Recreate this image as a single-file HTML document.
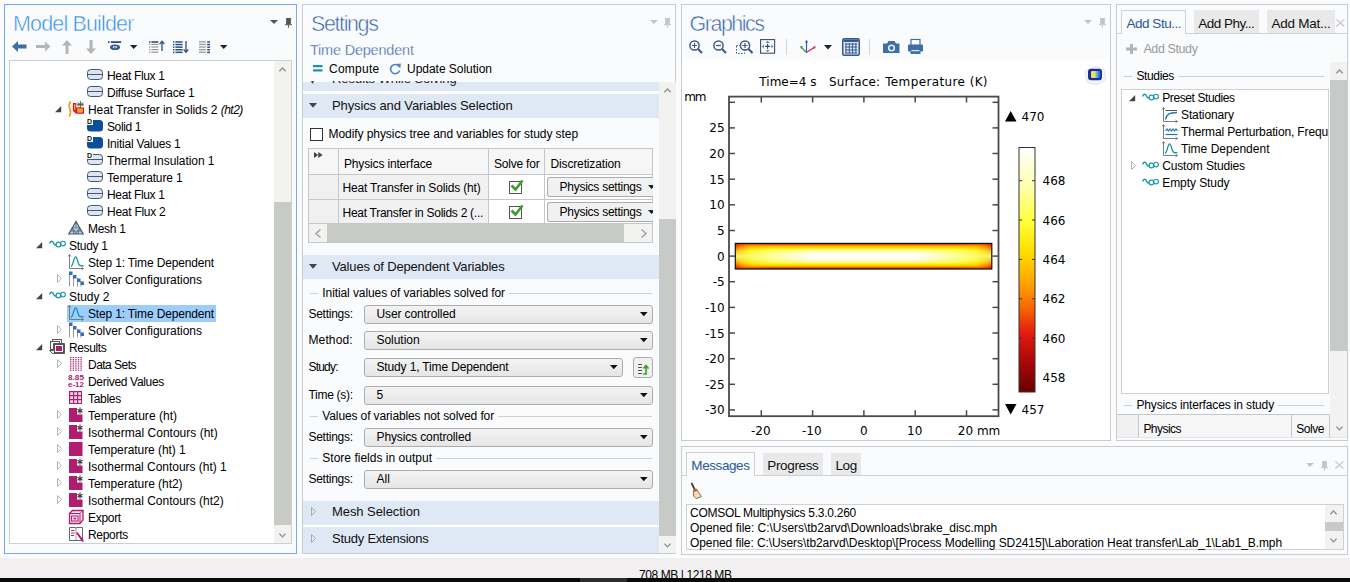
<!DOCTYPE html>
<html><head><meta charset="utf-8"><title>COMSOL Multiphysics</title>
<style>
html,body{margin:0;padding:0}
body{width:1350px;height:582px;overflow:hidden;background:#fafbfd;position:relative;font-family:"Liberation Sans",sans-serif}
div,span,svg{position:absolute;box-sizing:border-box}
svg{overflow:visible}
svg text{font-family:"Liberation Sans",sans-serif}
</style></head>
<body>
<div style="left:0px;top:557.5px;width:1350px;height:21px;background:#f1eff0;"></div>
<div style="left:0px;top:578px;width:1350px;height:4px;background:#0a0a0a;"></div>
<span style="left:639px;top:568px;font:12px/14px 'Liberation Sans',sans-serif;color:#000;white-space:pre;letter-spacing:-0.417px;">708 MB | 1218 MB</span>
<div style="left:0px;top:578px;width:1350px;height:4px;background:#0a0a0a;"></div>
<div style="left:580px;top:578px;width:47px;height:4px;background:#2c2c2c;"></div>
<div style="left:4px;top:4px;width:293px;height:550px;border:1px solid #72aaf3;"></div>
<span style="left:13px;top:11.5px;font:21.5px/24px 'Liberation Sans',sans-serif;color:#2e8be3;white-space:pre;letter-spacing:-0.842px;-webkit-text-stroke:0.55px #fafbfd;">Model Builder</span>
<svg style="left:270px;top:19.8px;" width="8" height="4" viewBox="0 0 8 4"><path d="M0 0 L8 0 L4 3.9 Z" fill="#555"/></svg>
<svg style="left:285px;top:18px;" width="7" height="10" viewBox="0 0 7 10"><rect x="1.1" y="0" width="4.8" height="6.4" fill="#555"/><rect x="0" y="6.2" width="7" height="1" fill="#555"/><rect x="3" y="7.2" width="1" height="2.5" fill="#555"/></svg>
<svg style="left:12px;top:41px;" width="15" height="11" viewBox="0 0 15 11"><path d="M0 5.5 L6 0 L6 3.5 L14.5 3.5 L14.5 7.5 L6 7.5 L6 11 Z" fill="#3d6ea8"/></svg>
<svg style="left:36px;top:41px;" width="15" height="11" viewBox="0 0 15 11"><path d="M14.5 5.5 L9 0.5 L9 4 L0 4 L0 7 L9 7 L9 10.5 Z" fill="#b5b5b5"/></svg>
<svg style="left:62px;top:40px;" width="10" height="14" viewBox="0 0 10 14"><path d="M5 0 L10 5.5 L6.5 5.5 L6.5 14 L3.5 14 L3.5 5.5 L0 5.5 Z" fill="#b5b5b5"/></svg>
<svg style="left:86px;top:40px;" width="10" height="14" viewBox="0 0 10 14"><path d="M5 14 L10 8.5 L6.5 8.5 L6.5 0 L3.5 0 L3.5 8.5 L0 8.5 Z" fill="#b5b5b5"/></svg>
<svg style="left:108px;top:41px;" width="14" height="10" viewBox="0 0 14 10"><rect x="0" y="0.2" width="1.6" height="1.8" fill="#2f4f80"/><rect x="2.9" y="0.2" width="10.2" height="1.8" fill="#2f4f80"/><ellipse cx="7" cy="6.2" rx="5" ry="2.8" fill="#35588f"/><ellipse cx="7" cy="6.2" rx="2.3" ry="1.1" fill="#e4eaf4"/><circle cx="7" cy="6.2" r="0.8" fill="#35588f"/></svg>
<svg style="left:130px;top:45px;" width="8" height="5" viewBox="0 0 8 5"><path d="M0 0 L7.4 0 L3.7 4 Z" fill="#222"/></svg>
<svg style="left:149.3px;top:41px;" width="16" height="13" viewBox="0 0 16 13"><rect x="0" y="0.2" width="1.4" height="1.6" fill="#2f4f80"/><rect x="2.4" y="0.2" width="7" height="1.6" fill="#2f4f80"/><rect x="0" y="2.8" width="1.4" height="1.2" fill="#9a9a9a"/><rect x="2.4" y="2.8" width="7" height="1.2" fill="#9a9a9a"/><rect x="0" y="5.4" width="1.4" height="1.2" fill="#9a9a9a"/><rect x="2.4" y="5.4" width="7" height="1.2" fill="#9a9a9a"/><rect x="0" y="8.0" width="1.4" height="1.2" fill="#9a9a9a"/><rect x="2.4" y="8.0" width="7" height="1.2" fill="#9a9a9a"/><rect x="0" y="10.6" width="1.4" height="1.2" fill="#9a9a9a"/><rect x="2.4" y="10.6" width="7" height="1.2" fill="#9a9a9a"/><path d="M13 10 L13 0.5 M10.6 3.2 L13 0.3 L15.4 3.2" stroke="#2f4f80" stroke-width="1.3" fill="none"/></svg>
<svg style="left:173.4px;top:41px;" width="16" height="13" viewBox="0 0 16 13"><rect x="0" y="0.2" width="1.4" height="1.5" fill="#2f4f80"/><rect x="2.4" y="0.2" width="7.2" height="1.5" fill="#2f4f80"/><rect x="0" y="2.8" width="1.4" height="1.5" fill="#2f4f80"/><rect x="2.4" y="2.8" width="7.2" height="1.5" fill="#2f4f80"/><rect x="0" y="5.4" width="1.4" height="1.5" fill="#2f4f80"/><rect x="2.4" y="5.4" width="7.2" height="1.5" fill="#2f4f80"/><rect x="0" y="8.0" width="1.4" height="1.5" fill="#2f4f80"/><rect x="2.4" y="8.0" width="7.2" height="1.5" fill="#2f4f80"/><rect x="0" y="10.6" width="1.4" height="1.5" fill="#2f4f80"/><rect x="2.4" y="10.6" width="7.2" height="1.5" fill="#2f4f80"/><path d="M13 0 L13 10.8 M10.6 8.3 L13 11.2 L15.4 8.3" stroke="#2f4f80" stroke-width="1.3" fill="none"/></svg>
<svg style="left:199px;top:41px;" width="16" height="13" viewBox="0 0 16 13"><rect x="0" y="0.2" width="6.8" height="1.3" fill="#9a9a9a"/><rect x="8.2" y="0.2" width="2.8" height="1.5" fill="#2f4f80"/><rect x="0" y="2.8" width="6.8" height="1.3" fill="#9a9a9a"/><rect x="8.2" y="2.8" width="2.8" height="1.5" fill="#2f4f80"/><rect x="0" y="5.4" width="6.8" height="1.3" fill="#9a9a9a"/><rect x="8.2" y="5.4" width="2.8" height="1.5" fill="#2f4f80"/><rect x="0" y="8.0" width="6.8" height="1.3" fill="#9a9a9a"/><rect x="8.2" y="8.0" width="2.8" height="1.5" fill="#2f4f80"/><rect x="0" y="10.6" width="6.8" height="1.3" fill="#9a9a9a"/><rect x="8.2" y="10.6" width="2.8" height="1.5" fill="#2f4f80"/></svg>
<svg style="left:220px;top:45px;" width="8" height="5" viewBox="0 0 8 5"><path d="M0 0 L7.4 0 L3.7 4 Z" fill="#222"/></svg>
<div style="left:9px;top:60px;width:283px;height:484px;background:#fff;border:1px solid #cfd0d3;"></div>
<div style="left:274px;top:61px;width:17px;height:482px;background:#f2f2f1;"></div>
<div style="left:274px;top:202px;width:17px;height:323px;background:#c7cac7;"></div>
<svg style="left:279px;top:67px;" width="7" height="5" viewBox="0 0 7 5"><path d="M0.4 4.2 L3.5 0.9 L6.6 4.2" fill="none" stroke="#8c8c8c" stroke-width="1.3"/></svg>
<svg style="left:279px;top:533px;" width="7" height="5" viewBox="0 0 7 5"><path d="M0.4 0.6 L3.5 3.9 L6.6 0.6" fill="none" stroke="#8c8c8c" stroke-width="1.3"/></svg>
<svg style="left:87px;top:67px;" width="16" height="16" viewBox="0 0 16 16"><rect x="0.5" y="2.5" width="15" height="10" rx="3.2" fill="#e1e4ec" stroke="#3c5a7d" stroke-width="1"/><line x1="0.5" y1="7.5" x2="15.5" y2="7.5" stroke="#3c5a7d" stroke-width="1"/></svg>
<span style="left:107px;top:68.5px;font:12px/14px 'Liberation Sans',sans-serif;color:#000;white-space:pre;letter-spacing:-0.351px;">Heat Flux 1</span>
<svg style="left:87px;top:84px;" width="16" height="16" viewBox="0 0 16 16"><rect x="0.5" y="2.5" width="15" height="10" rx="3.2" fill="#e1e4ec" stroke="#3c5a7d" stroke-width="1"/><line x1="0.5" y1="7.5" x2="15.5" y2="7.5" stroke="#3c5a7d" stroke-width="1"/></svg>
<span style="left:107px;top:85.5px;font:12px/14px 'Liberation Sans',sans-serif;color:#000;white-space:pre;letter-spacing:-0.260px;">Diffuse Surface 1</span>
<svg style="left:55px;top:106px;" width="7" height="7" viewBox="0 0 7 7"><path d="M6.2 0 L6.2 6.2 L0 6.2 Z" fill="#444"/></svg>
<svg style="left:68px;top:101px;" width="16" height="16" viewBox="0 0 16 16"><path d="M2.6 0.3 C0.6 3.5 0.9 6 2 8.3 C3 10.8 2.6 13 1.2 15.6" fill="none" stroke="#f79a1e" stroke-width="1.7"/><path d="M4.9 2.1 L8.4 2.1 L8.4 6 L16 6 L16 12.8 L8 12.8 L4.9 9.8 Z" fill="#d9142c"/><rect x="9.2" y="7.4" width="5.6" height="4.2" fill="#f6a623"/><path d="M6 3.2 L7.4 3.2 L7.4 9.8 L6 8.6 Z" fill="#f6a623"/><path d="M8.4 4.2 C9.5 7.2 14.5 7.2 16 4.2 L16 6.4 L8.4 6.4 Z" fill="#fff"/><g stroke="#3f4b3f" stroke-width="0.85"><line x1="12.4" y1="0" x2="12.4" y2="6.8"/><line x1="9.4" y1="1.7" x2="15.4" y2="5.1"/><line x1="9.4" y1="5.1" x2="15.4" y2="1.7"/><line x1="9" y1="3.4" x2="15.8" y2="3.4"/></g></svg>
<span style="left:88px;top:102.5px;font:12px/14px 'Liberation Sans',sans-serif;color:#000;white-space:pre;letter-spacing:-0.078px;">Heat Transfer in Solids 2 </span>
<span style="left:220.7016625px;top:102.5px;font:italic 12px/14px 'Liberation Sans',sans-serif;color:#000;white-space:pre;letter-spacing:-0.515px;">(ht2)</span>
<svg style="left:87px;top:118px;" width="16" height="16" viewBox="0 0 16 16"><rect x="0" y="2" width="16" height="11.5" rx="3.5" fill="#0b4f9c"/><rect x="-1" y="0" width="7" height="7" fill="#fff"/><text x="0" y="6" font-size="7" font-weight="bold" fill="#111">D</text></svg>
<span style="left:107px;top:119.5px;font:12px/14px 'Liberation Sans',sans-serif;color:#000;white-space:pre;letter-spacing:-0.384px;">Solid 1</span>
<svg style="left:87px;top:135px;" width="16" height="16" viewBox="0 0 16 16"><rect x="0" y="2" width="16" height="11.5" rx="3.5" fill="#0b4f9c"/><rect x="-1" y="0" width="7" height="7" fill="#fff"/><text x="0" y="6" font-size="7" font-weight="bold" fill="#111">D</text></svg>
<span style="left:107px;top:136.5px;font:12px/14px 'Liberation Sans',sans-serif;color:#000;white-space:pre;letter-spacing:-0.228px;">Initial Values 1</span>
<svg style="left:87px;top:152px;" width="16" height="16" viewBox="0 0 16 16"><rect x="0.5" y="2.5" width="15" height="10" rx="3.2" fill="#e1e4ec" stroke="#3c5a7d" stroke-width="1"/><line x1="0.5" y1="7.5" x2="15.5" y2="7.5" stroke="#3c5a7d" stroke-width="1"/><rect x="-1" y="0" width="7" height="7" fill="#fff"/><text x="0" y="6" font-size="7" font-weight="bold" fill="#111">D</text></svg>
<span style="left:107px;top:153.5px;font:12px/14px 'Liberation Sans',sans-serif;color:#000;white-space:pre;letter-spacing:-0.066px;">Thermal Insulation 1</span>
<svg style="left:87px;top:169px;" width="16" height="16" viewBox="0 0 16 16"><rect x="0.5" y="2.5" width="15" height="10" rx="3.2" fill="#e1e4ec" stroke="#3c5a7d" stroke-width="1"/><line x1="0.5" y1="7.5" x2="15.5" y2="7.5" stroke="#3c5a7d" stroke-width="1"/></svg>
<span style="left:107px;top:170.5px;font:12px/14px 'Liberation Sans',sans-serif;color:#000;white-space:pre;letter-spacing:-0.144px;">Temperature 1</span>
<svg style="left:87px;top:186px;" width="16" height="16" viewBox="0 0 16 16"><rect x="0.5" y="2.5" width="15" height="10" rx="3.2" fill="#e1e4ec" stroke="#3c5a7d" stroke-width="1"/><line x1="0.5" y1="7.5" x2="15.5" y2="7.5" stroke="#3c5a7d" stroke-width="1"/></svg>
<span style="left:107px;top:187.5px;font:12px/14px 'Liberation Sans',sans-serif;color:#000;white-space:pre;letter-spacing:-0.351px;">Heat Flux 1</span>
<svg style="left:87px;top:203px;" width="16" height="16" viewBox="0 0 16 16"><rect x="0.5" y="2.5" width="15" height="10" rx="3.2" fill="#e1e4ec" stroke="#3c5a7d" stroke-width="1"/><line x1="0.5" y1="7.5" x2="15.5" y2="7.5" stroke="#3c5a7d" stroke-width="1"/></svg>
<span style="left:107px;top:204.5px;font:12px/14px 'Liberation Sans',sans-serif;color:#000;white-space:pre;letter-spacing:-0.260px;">Heat Flux 2</span>
<svg style="left:68px;top:220px;" width="16" height="16" viewBox="0 0 16 16"><path d="M8 1.5 L15.2 14 L0.8 14 Z" fill="#c9ced6" stroke="#3c5a7d" stroke-width="1.2"/><path d="M4.4 7.8 L11.6 7.8 L8 14 Z M8 1.5 L8 7.8 M2.6 11 L13.4 11 M4.4 7.8 L6 14 M11.6 7.8 L10 14" fill="none" stroke="#3c5a7d" stroke-width="0.7"/></svg>
<span style="left:88px;top:221.5px;font:12px/14px 'Liberation Sans',sans-serif;color:#000;white-space:pre;letter-spacing:-0.291px;">Mesh 1</span>
<svg style="left:36px;top:242px;" width="7" height="7" viewBox="0 0 7 7"><path d="M6.2 0 L6.2 6.2 L0 6.2 Z" fill="#444"/></svg>
<svg style="left:49px;top:237px;" width="16" height="16" viewBox="0 0 16 16"><path d="M0.5 6.5 C1.5 3.5 3.5 3.5 4.5 6 C5.3 8 6.5 8.5 7.5 7.5" fill="none" stroke="#1b98a6" stroke-width="1.4"/><circle cx="9.4" cy="7.5" r="2.4" fill="none" stroke="#1b98a6" stroke-width="1.15"/><circle cx="14" cy="6.6" r="2.4" fill="none" stroke="#1b98a6" stroke-width="1.15"/></svg>
<span style="left:69px;top:238.5px;font:12px/14px 'Liberation Sans',sans-serif;color:#000;white-space:pre;letter-spacing:-0.284px;">Study 1</span>
<svg style="left:68px;top:254px;" width="16" height="16" viewBox="0 0 16 16"><path d="M1.5 0.5 L1.5 14.5 L15.5 14.5" fill="none" stroke="#6e6e6e" stroke-width="0.9"/><path d="M0 2.5 L1.5 0.5 L3 2.5 M13.5 13 L15.5 14.5 L13.5 16" fill="none" stroke="#6e6e6e" stroke-width="0.8"/><path d="M3 12.5 C5.3 11.5 5.8 2.8 7.6 2.8 C9.4 2.8 9.6 10.5 11.8 11.5 L15.5 11.8" fill="none" stroke="#1b8fa6" stroke-width="1.3"/></svg>
<span style="left:88px;top:255.5px;font:12px/14px 'Liberation Sans',sans-serif;color:#000;white-space:pre;letter-spacing:-0.159px;">Step 1: Time Dependent</span>
<svg style="left:57px;top:274px;" width="6" height="10" viewBox="0 0 6 10"><path d="M0.5 0.5 L4.5 4.5 L0.5 8.5 Z" fill="#fff" stroke="#b4b4b4" stroke-width="1"/></svg>
<svg style="left:68px;top:271px;" width="16" height="16" viewBox="0 0 16 16"><g stroke="#999" stroke-width="1"><line x1="1.5" y1="1" x2="1.5" y2="15.5"/><line x1="5.5" y1="4" x2="5.5" y2="15.5"/><line x1="9.5" y1="7" x2="9.5" y2="15.5"/><line x1="13" y1="10" x2="13" y2="15.5"/></g><rect x="1" y="0.5" width="3.5" height="3.5" fill="#3a6db5"/><rect x="5" y="4" width="3.5" height="3.5" fill="#3a6db5"/><rect x="9" y="7.5" width="3.5" height="3.5" fill="#3a6db5"/><rect x="12.5" y="10.5" width="3.5" height="3.5" fill="#3a6db5"/></svg>
<span style="left:88px;top:272.5px;font:12px/14px 'Liberation Sans',sans-serif;color:#000;white-space:pre;letter-spacing:-0.039px;">Solver Configurations</span>
<svg style="left:36px;top:293px;" width="7" height="7" viewBox="0 0 7 7"><path d="M6.2 0 L6.2 6.2 L0 6.2 Z" fill="#444"/></svg>
<svg style="left:49px;top:288px;" width="16" height="16" viewBox="0 0 16 16"><path d="M0.5 6.5 C1.5 3.5 3.5 3.5 4.5 6 C5.3 8 6.5 8.5 7.5 7.5" fill="none" stroke="#1b98a6" stroke-width="1.4"/><circle cx="9.4" cy="7.5" r="2.4" fill="none" stroke="#1b98a6" stroke-width="1.15"/><circle cx="14" cy="6.6" r="2.4" fill="none" stroke="#1b98a6" stroke-width="1.15"/></svg>
<span style="left:69px;top:289.5px;font:12px/14px 'Liberation Sans',sans-serif;color:#000;white-space:pre;letter-spacing:-0.056px;">Study 2</span>
<div style="left:67px;top:305px;width:149px;height:17px;background:#9ccdfc;"></div>
<svg style="left:68px;top:305px;" width="16" height="16" viewBox="0 0 16 16"><path d="M1.5 0.5 L1.5 14.5 L15.5 14.5" fill="none" stroke="#6e6e6e" stroke-width="0.9"/><path d="M0 2.5 L1.5 0.5 L3 2.5 M13.5 13 L15.5 14.5 L13.5 16" fill="none" stroke="#6e6e6e" stroke-width="0.8"/><path d="M3 12.5 C5.3 11.5 5.8 2.8 7.6 2.8 C9.4 2.8 9.6 10.5 11.8 11.5 L15.5 11.8" fill="none" stroke="#1b8fa6" stroke-width="1.3"/></svg>
<span style="left:88px;top:306.5px;font:12px/14px 'Liberation Sans',sans-serif;color:#000;white-space:pre;letter-spacing:-0.159px;">Step 1: Time Dependent</span>
<svg style="left:57px;top:325px;" width="6" height="10" viewBox="0 0 6 10"><path d="M0.5 0.5 L4.5 4.5 L0.5 8.5 Z" fill="#fff" stroke="#b4b4b4" stroke-width="1"/></svg>
<svg style="left:68px;top:322px;" width="16" height="16" viewBox="0 0 16 16"><g stroke="#999" stroke-width="1"><line x1="1.5" y1="1" x2="1.5" y2="15.5"/><line x1="5.5" y1="4" x2="5.5" y2="15.5"/><line x1="9.5" y1="7" x2="9.5" y2="15.5"/><line x1="13" y1="10" x2="13" y2="15.5"/></g><rect x="1" y="0.5" width="3.5" height="3.5" fill="#3a6db5"/><rect x="5" y="4" width="3.5" height="3.5" fill="#3a6db5"/><rect x="9" y="7.5" width="3.5" height="3.5" fill="#3a6db5"/><rect x="12.5" y="10.5" width="3.5" height="3.5" fill="#3a6db5"/></svg>
<span style="left:88px;top:323.5px;font:12px/14px 'Liberation Sans',sans-serif;color:#000;white-space:pre;letter-spacing:-0.039px;">Solver Configurations</span>
<svg style="left:36px;top:344px;" width="7" height="7" viewBox="0 0 7 7"><path d="M6.2 0 L6.2 6.2 L0 6.2 Z" fill="#444"/></svg>
<svg style="left:49px;top:339px;" width="16" height="16" viewBox="0 0 16 16"><rect x="3.5" y="0.5" width="9" height="8" fill="#fff" stroke="#555"/><rect x="1.5" y="2.5" width="9" height="8" fill="#fff" stroke="#555"/><path d="M0.5 11.5 L3.5 14.5 L15.5 14.5 L15.5 4.5 L4.5 4.5 L4.5 11.5 Z" fill="#eee" stroke="#555"/><rect x="5.5" y="5.5" width="9" height="8" fill="#fff" stroke="#555"/><rect x="7" y="7" width="6" height="5" fill="#b01c6e"/></svg>
<span style="left:69px;top:340.5px;font:12px/14px 'Liberation Sans',sans-serif;color:#000;white-space:pre;letter-spacing:-0.388px;">Results</span>
<svg style="left:57px;top:359px;" width="6" height="10" viewBox="0 0 6 10"><path d="M0.5 0.5 L4.5 4.5 L0.5 8.5 Z" fill="#fff" stroke="#b4b4b4" stroke-width="1"/></svg>
<svg style="left:68px;top:356px;" width="16" height="16" viewBox="0 0 16 16"><rect x="2.0" y="1.0" width="1.4" height="1.2" fill="#b01c6e"/><rect x="2.0" y="3.1" width="1.4" height="1.2" fill="#b01c6e"/><rect x="2.0" y="5.2" width="1.4" height="1.2" fill="#b01c6e"/><rect x="2.0" y="7.3" width="1.4" height="1.2" fill="#b01c6e"/><rect x="2.0" y="9.4" width="1.4" height="1.2" fill="#b01c6e"/><rect x="2.0" y="11.5" width="1.4" height="1.2" fill="#b01c6e"/><rect x="2.0" y="13.6" width="1.4" height="1.2" fill="#b01c6e"/><rect x="4.6" y="1.0" width="1.4" height="1.2" fill="#b01c6e"/><rect x="4.6" y="3.1" width="1.4" height="1.2" fill="#b01c6e"/><rect x="4.6" y="5.2" width="1.4" height="1.2" fill="#b01c6e"/><rect x="4.6" y="7.3" width="1.4" height="1.2" fill="#b01c6e"/><rect x="4.6" y="9.4" width="1.4" height="1.2" fill="#b01c6e"/><rect x="4.6" y="11.5" width="1.4" height="1.2" fill="#b01c6e"/><rect x="4.6" y="13.6" width="1.4" height="1.2" fill="#b01c6e"/><rect x="7.2" y="1.0" width="1.4" height="1.2" fill="#b01c6e"/><rect x="7.2" y="3.1" width="1.4" height="1.2" fill="#b01c6e"/><rect x="7.2" y="5.2" width="1.4" height="1.2" fill="#b01c6e"/><rect x="7.2" y="7.3" width="1.4" height="1.2" fill="#b01c6e"/><rect x="7.2" y="9.4" width="1.4" height="1.2" fill="#b01c6e"/><rect x="7.2" y="11.5" width="1.4" height="1.2" fill="#b01c6e"/><rect x="7.2" y="13.6" width="1.4" height="1.2" fill="#b01c6e"/><rect x="9.8" y="1.0" width="1.4" height="1.2" fill="#b01c6e"/><rect x="9.8" y="3.1" width="1.4" height="1.2" fill="#b01c6e"/><rect x="9.8" y="5.2" width="1.4" height="1.2" fill="#b01c6e"/><rect x="9.8" y="7.3" width="1.4" height="1.2" fill="#b01c6e"/><rect x="9.8" y="9.4" width="1.4" height="1.2" fill="#b01c6e"/><rect x="9.8" y="11.5" width="1.4" height="1.2" fill="#b01c6e"/><rect x="9.8" y="13.6" width="1.4" height="1.2" fill="#b01c6e"/><rect x="12.4" y="1.0" width="1.4" height="1.2" fill="#b01c6e"/><rect x="12.4" y="3.1" width="1.4" height="1.2" fill="#b01c6e"/><rect x="12.4" y="5.2" width="1.4" height="1.2" fill="#b01c6e"/><rect x="12.4" y="7.3" width="1.4" height="1.2" fill="#b01c6e"/><rect x="12.4" y="9.4" width="1.4" height="1.2" fill="#b01c6e"/><rect x="12.4" y="11.5" width="1.4" height="1.2" fill="#b01c6e"/><rect x="12.4" y="13.6" width="1.4" height="1.2" fill="#b01c6e"/></svg>
<span style="left:88px;top:357.5px;font:12px/14px 'Liberation Sans',sans-serif;color:#000;white-space:pre;letter-spacing:-0.532px;">Data Sets</span>
<svg style="left:68px;top:373px;" width="16" height="16" viewBox="0 0 16 16"><text x="0" y="7" font-size="7.5" font-weight="bold" fill="#b01c6e" textLength="16" lengthAdjust="spacingAndGlyphs">8.85</text><text x="0" y="14" font-size="7.5" font-weight="bold" fill="#b01c6e" textLength="16" lengthAdjust="spacingAndGlyphs">e-12</text></svg>
<span style="left:88px;top:374.5px;font:12px/14px 'Liberation Sans',sans-serif;color:#000;white-space:pre;letter-spacing:-0.320px;">Derived Values</span>
<svg style="left:68px;top:390px;" width="16" height="16" viewBox="0 0 16 16"><rect x="1" y="1" width="13" height="13" fill="#b01c6e"/><rect x="2.2" y="2.2" width="2.8" height="2.8" fill="#f3d9e6"/><rect x="2.2" y="6.2" width="2.8" height="2.8" fill="#f3d9e6"/><rect x="2.2" y="10.2" width="2.8" height="2.8" fill="#f3d9e6"/><rect x="6.2" y="2.2" width="2.8" height="2.8" fill="#f3d9e6"/><rect x="6.2" y="6.2" width="2.8" height="2.8" fill="#f3d9e6"/><rect x="6.2" y="10.2" width="2.8" height="2.8" fill="#f3d9e6"/><rect x="10.2" y="2.2" width="2.8" height="2.8" fill="#f3d9e6"/><rect x="10.2" y="6.2" width="2.8" height="2.8" fill="#f3d9e6"/><rect x="10.2" y="10.2" width="2.8" height="2.8" fill="#f3d9e6"/></svg>
<span style="left:88px;top:391.5px;font:12px/14px 'Liberation Sans',sans-serif;color:#000;white-space:pre;letter-spacing:-0.298px;">Tables</span>
<svg style="left:57px;top:410px;" width="6" height="10" viewBox="0 0 6 10"><path d="M0.5 0.5 L4.5 4.5 L0.5 8.5 Z" fill="#fff" stroke="#b4b4b4" stroke-width="1"/></svg>
<svg style="left:68px;top:407px;" width="16" height="16" viewBox="0 0 16 16"><path d="M1 1 L9 1 L9 7.6 L14.5 7.6 L14.5 15 L1 15 Z" fill="#b01c6e"/><g stroke="#333" stroke-width="1.1"><line x1="12" y1="0.6" x2="12" y2="6.8"/><line x1="9.5" y1="2.2" x2="14.5" y2="5.2"/><line x1="9.5" y1="5.2" x2="14.5" y2="2.2"/></g></svg>
<span style="left:88px;top:408.5px;font:12px/14px 'Liberation Sans',sans-serif;color:#000;white-space:pre;letter-spacing:0.019px;">Temperature (ht)</span>
<svg style="left:57px;top:427px;" width="6" height="10" viewBox="0 0 6 10"><path d="M0.5 0.5 L4.5 4.5 L0.5 8.5 Z" fill="#fff" stroke="#b4b4b4" stroke-width="1"/></svg>
<svg style="left:68px;top:424px;" width="16" height="16" viewBox="0 0 16 16"><path d="M1 1 L9 1 L9 7.6 L14.5 7.6 L14.5 15 L1 15 Z" fill="#b01c6e"/><g stroke="#333" stroke-width="1.1"><line x1="12" y1="0.6" x2="12" y2="6.8"/><line x1="9.5" y1="2.2" x2="14.5" y2="5.2"/><line x1="9.5" y1="5.2" x2="14.5" y2="2.2"/></g></svg>
<span style="left:88px;top:425.5px;font:12px/14px 'Liberation Sans',sans-serif;color:#000;white-space:pre;letter-spacing:0.014px;">Isothermal Contours (ht)</span>
<svg style="left:57px;top:444px;" width="6" height="10" viewBox="0 0 6 10"><path d="M0.5 0.5 L4.5 4.5 L0.5 8.5 Z" fill="#fff" stroke="#b4b4b4" stroke-width="1"/></svg>
<svg style="left:68px;top:441px;" width="16" height="16" viewBox="0 0 16 16"><rect x="1" y="1" width="13.5" height="14" fill="#b01c6e"/></svg>
<span style="left:88px;top:442.5px;font:12px/14px 'Liberation Sans',sans-serif;color:#000;white-space:pre;letter-spacing:-0.061px;">Temperature (ht) 1</span>
<svg style="left:57px;top:461px;" width="6" height="10" viewBox="0 0 6 10"><path d="M0.5 0.5 L4.5 4.5 L0.5 8.5 Z" fill="#fff" stroke="#b4b4b4" stroke-width="1"/></svg>
<svg style="left:68px;top:458px;" width="16" height="16" viewBox="0 0 16 16"><path d="M1 1 L9 1 L9 7.6 L14.5 7.6 L14.5 15 L1 15 Z" fill="#b01c6e"/><g stroke="#333" stroke-width="1.1"><line x1="12" y1="0.6" x2="12" y2="6.8"/><line x1="9.5" y1="2.2" x2="14.5" y2="5.2"/><line x1="9.5" y1="5.2" x2="14.5" y2="2.2"/></g></svg>
<span style="left:88px;top:459.5px;font:12px/14px 'Liberation Sans',sans-serif;color:#000;white-space:pre;letter-spacing:-0.026px;">Isothermal Contours (ht) 1</span>
<svg style="left:57px;top:478px;" width="6" height="10" viewBox="0 0 6 10"><path d="M0.5 0.5 L4.5 4.5 L0.5 8.5 Z" fill="#fff" stroke="#b4b4b4" stroke-width="1"/></svg>
<svg style="left:68px;top:475px;" width="16" height="16" viewBox="0 0 16 16"><path d="M1 1 L9 1 L9 7.6 L14.5 7.6 L14.5 15 L1 15 Z" fill="#b01c6e"/><g stroke="#333" stroke-width="1.1"><line x1="12" y1="0.6" x2="12" y2="6.8"/><line x1="9.5" y1="2.2" x2="14.5" y2="5.2"/><line x1="9.5" y1="5.2" x2="14.5" y2="2.2"/></g></svg>
<span style="left:88px;top:476.5px;font:12px/14px 'Liberation Sans',sans-serif;color:#000;white-space:pre;letter-spacing:-0.051px;">Temperature (ht2)</span>
<svg style="left:57px;top:495px;" width="6" height="10" viewBox="0 0 6 10"><path d="M0.5 0.5 L4.5 4.5 L0.5 8.5 Z" fill="#fff" stroke="#b4b4b4" stroke-width="1"/></svg>
<svg style="left:68px;top:492px;" width="16" height="16" viewBox="0 0 16 16"><path d="M1 1 L9 1 L9 7.6 L14.5 7.6 L14.5 15 L1 15 Z" fill="#b01c6e"/><g stroke="#333" stroke-width="1.1"><line x1="12" y1="0.6" x2="12" y2="6.8"/><line x1="9.5" y1="2.2" x2="14.5" y2="5.2"/><line x1="9.5" y1="5.2" x2="14.5" y2="2.2"/></g></svg>
<span style="left:88px;top:493.5px;font:12px/14px 'Liberation Sans',sans-serif;color:#000;white-space:pre;letter-spacing:-0.014px;">Isothermal Contours (ht2)</span>
<svg style="left:68px;top:509px;" width="16" height="16" viewBox="0 0 16 16"><path d="M1.5 4.5 L4.5 1.5 L15 1.5 L15 11 L12 14.5 L1.5 14.5 Z" fill="#f7e3ee" stroke="#b01c6e" stroke-width="1.3"/><path d="M1.5 4.5 L12 4.5 L15 1.5 M12 4.5 L12 14.5" fill="none" stroke="#b01c6e" stroke-width="1"/><rect x="3.5" y="7" width="6.5" height="5" fill="none" stroke="#b01c6e" stroke-width="1"/><rect x="5.5" y="8.7" width="2.5" height="1.6" fill="#b01c6e"/></svg>
<span style="left:88px;top:510.5px;font:12px/14px 'Liberation Sans',sans-serif;color:#000;white-space:pre;letter-spacing:-0.297px;">Export</span>
<svg style="left:68px;top:526px;" width="16" height="16" viewBox="0 0 16 16"><path d="M1.5 1.5 L7.5 1.5 L8 2.5 L8.5 1.5 L14.5 1.5 L14.5 14.5 L1.5 14.5 Z" fill="#fff" stroke="#666" stroke-width="1"/><line x1="8" y1="2.5" x2="8" y2="14" stroke="#888" stroke-width="0.8"/><g stroke="#b01c6e" stroke-width="1"><line x1="3" y1="4.5" x2="6.5" y2="4.5"/><line x1="3" y1="7" x2="6.5" y2="7"/><line x1="3" y1="9.5" x2="6" y2="9.5"/></g><path d="M8 7 L14 15.5 L15.5 16 L15.5 14 L9.5 6 Z" fill="#b01c6e"/></svg>
<span style="left:88px;top:527.5px;font:12px/14px 'Liberation Sans',sans-serif;color:#000;white-space:pre;letter-spacing:-0.302px;">Reports</span>
<div style="left:302px;top:4px;width:374px;height:550px;border:1px solid #c9cbcf;"></div>
<span style="left:311px;top:11.5px;font:21.5px/24px 'Liberation Sans',sans-serif;color:#305ea9;white-space:pre;letter-spacing:-1.398px;-webkit-text-stroke:0.55px #fafbfd;">Settings</span>
<span style="left:310px;top:41.6px;font:14.5px/16px 'Liberation Sans',sans-serif;color:#305ea9;white-space:pre;letter-spacing:-0.211px;-webkit-text-stroke:0.3px #fafbfd;">Time Dependent</span>
<svg style="left:649.5px;top:19.8px;" width="8" height="4" viewBox="0 0 8 4"><path d="M0 0 L8 0 L4 3.9 Z" fill="#c2c5c8"/></svg>
<svg style="left:664px;top:18px;" width="7" height="10" viewBox="0 0 7 10"><rect x="1.1" y="0" width="4.8" height="6.4" fill="#c2c5c8"/><rect x="0" y="6.2" width="7" height="1" fill="#c2c5c8"/><rect x="3" y="7.2" width="1" height="2.5" fill="#c2c5c8"/></svg>
<svg style="left:313px;top:65px;" width="10" height="7" viewBox="0 0 10 7"><rect x="0" y="0" width="9.5" height="2.2" fill="#1b8fb5"/><rect x="0" y="4.3" width="9.5" height="2.2" fill="#1b8fb5"/></svg>
<span style="left:329px;top:62px;font:12px/14px 'Liberation Sans',sans-serif;color:#000;white-space:pre;letter-spacing:0.259px;">Compute</span>
<svg style="left:389px;top:63px;" width="12" height="12" viewBox="0 0 12 12"><path d="M9.8 3.2 A4.6 4.6 0 1 0 10.6 7.5" fill="none" stroke="#4b86c6" stroke-width="1.6"/><path d="M7 1 L11.8 0.6 L11.4 5.4 Z" fill="#4b86c6"/></svg>
<span style="left:407px;top:62px;font:12px/14px 'Liberation Sans',sans-serif;color:#000;white-space:pre;letter-spacing:-0.026px;">Update Solution</span>
<div style="left:303px;top:82px;width:356px;height:9px;background:#dfe8f5;"></div>
<div style="left:303px;top:80.5px;width:356px;height:10px;overflow:hidden;"><span style="left:29px;top:-10px;font:13px/15px 'Liberation Sans',sans-serif;color:#222;white-space:pre;letter-spacing:-0.05px">Results While Solving</span><span style="left:6px;top:-4.5px;font:9px/8px 'DejaVu Sans',sans-serif;color:#444">&#9660;</span></div>
<div style="left:303px;top:91px;width:356px;height:2.5px;background:#fff;"></div>
<div style="left:303px;top:93.5px;width:356px;height:24px;background:#dfe8f5;"></div>
<svg style="left:309px;top:103px;" width="8" height="5" viewBox="0 0 8 5"><path d="M0 0 L8 0 L4 4.8 Z" fill="#444"/></svg>
<span style="left:332px;top:98px;font:13px/15px 'Liberation Sans',sans-serif;color:#111;white-space:pre;letter-spacing:-0.113px;">Physics and Variables Selection</span>
<div style="left:310px;top:128px;width:13px;height:13px;background:#fff;border:1px solid #333;"></div>
<span style="left:328.5px;top:126.5px;font:12px/14px 'Liberation Sans',sans-serif;color:#000;white-space:pre;letter-spacing:-0.068px;">Modify physics tree and variables for study step</span>
<div style="left:308px;top:148px;width:345px;height:95px;background:#fff;border:1px solid #c6c7ca;"></div>
<div style="left:309px;top:149px;width:343px;height:25px;background:#f6f6f7;"></div>
<div style="left:309px;top:174px;width:30px;height:50px;background:#f0f0f1;"></div>
<div style="left:339px;top:174px;width:150px;height:50px;background:#f1f1f2;"></div>
<div style="left:338px;top:149px;width:1px;height:75px;background:#c6c7ca;"></div>
<div style="left:488px;top:149px;width:1px;height:75px;background:#c6c7ca;"></div>
<div style="left:544px;top:149px;width:1px;height:75px;background:#c6c7ca;"></div>
<div style="left:309px;top:174px;width:343px;height:1px;background:#c6c7ca;"></div>
<div style="left:309px;top:199px;width:343px;height:1px;background:#c6c7ca;"></div>
<div style="left:309px;top:223px;width:343px;height:1px;background:#c6c7ca;"></div>
<svg style="left:313.7px;top:152.3px;" width="9" height="6" viewBox="0 0 9 6"><path d="M0 0 L4.2 3 L0 6 Z M4.3 0 L8.6 3 L4.3 6 Z" fill="#444"/></svg>
<span style="left:344px;top:157px;font:12px/14px 'Liberation Sans',sans-serif;color:#000;white-space:pre;letter-spacing:-0.159px;">Physics interface</span>
<span style="left:494px;top:157px;font:12px/14px 'Liberation Sans',sans-serif;color:#000;white-space:pre;letter-spacing:-0.206px;">Solve for</span>
<span style="left:550.5px;top:157px;font:12px/14px 'Liberation Sans',sans-serif;color:#000;white-space:pre;letter-spacing:-0.144px;">Discretization</span>
<span style="left:342.5px;top:180.7px;font:12px/14px 'Liberation Sans',sans-serif;color:#000;white-space:pre;letter-spacing:-0.168px;">Heat Transfer in Solids (ht)</span>
<span style="left:342.5px;top:205.7px;font:12px/14px 'Liberation Sans',sans-serif;color:#000;white-space:pre;letter-spacing:-0.274px;">Heat Transfer in Solids 2 (...</span>
<div style="left:509px;top:180.5px;width:13px;height:13px;background:#fff;border:1px solid #555;"></div>
<svg style="left:510px;top:178.5px;" width="14" height="13" viewBox="0 0 14 13"><path d="M1.5 6.5 L5.5 10.5 L12.5 1.5" fill="none" stroke="#3f9b2f" stroke-width="2.6"/></svg>
<div style="left:509px;top:205.5px;width:13px;height:13px;background:#fff;border:1px solid #555;"></div>
<svg style="left:510px;top:203.5px;" width="14" height="13" viewBox="0 0 14 13"><path d="M1.5 6.5 L5.5 10.5 L12.5 1.5" fill="none" stroke="#3f9b2f" stroke-width="2.6"/></svg>
<div style="left:547px;top:177px;width:106px;height:20px;background:#f1f1f1;border:1px solid #adadad;border-right:none;border-radius:3px 0 0 3px;"></div>
<span style="left:559.5px;top:179.7px;font:12px/14px 'Liberation Sans',sans-serif;color:#000;white-space:pre;letter-spacing:-0.252px;">Physics settings</span>
<svg style="left:648px;top:185px;overflow:hidden;" width="5" height="4" viewBox="0 0 5 4"><path d="M0 0 L7 0 L3.5 4 Z" fill="#222"/></svg>
<div style="left:547px;top:202px;width:106px;height:20px;background:#f1f1f1;border:1px solid #adadad;border-right:none;border-radius:3px 0 0 3px;"></div>
<span style="left:559.5px;top:204.7px;font:12px/14px 'Liberation Sans',sans-serif;color:#000;white-space:pre;letter-spacing:-0.252px;">Physics settings</span>
<svg style="left:648px;top:210px;overflow:hidden;" width="5" height="4" viewBox="0 0 5 4"><path d="M0 0 L7 0 L3.5 4 Z" fill="#222"/></svg>
<div style="left:309px;top:224px;width:343px;height:18px;background:#f2f2f1;"></div>
<div style="left:326.5px;top:224px;width:297.5px;height:18px;background:#c7cac7;"></div>
<svg style="left:315px;top:229px;" width="6" height="9" viewBox="0 0 6 9"><path d="M5.5 0.5 L1 4.5 L5.5 8.5" fill="none" stroke="#a0a0a0" stroke-width="1.4"/></svg>
<svg style="left:641px;top:229px;" width="6" height="9" viewBox="0 0 6 9"><path d="M0.5 0.5 L5 4.5 L0.5 8.5" fill="none" stroke="#a0a0a0" stroke-width="1.4"/></svg>
<div style="left:303px;top:254.5px;width:356px;height:24.5px;background:#dfe8f5;"></div>
<svg style="left:309px;top:263.7px;" width="8" height="5" viewBox="0 0 8 5"><path d="M0 0 L8 0 L4 4.8 Z" fill="#444"/></svg>
<span style="left:332px;top:258.7px;font:13px/15px 'Liberation Sans',sans-serif;color:#111;white-space:pre;letter-spacing:-0.165px;">Values of Dependent Variables</span>
<div style="left:309.5px;top:293.3px;width:8.5px;height:1px;background:#d0d0d0;"></div>
<span style="left:322.3px;top:285.8px;font:12px/14px 'Liberation Sans',sans-serif;color:#000;white-space:pre;letter-spacing:-0.089px;">Initial values of variables solved for</span>
<div style="left:509px;top:293.3px;width:143px;height:1px;background:#d0d0d0;"></div>
<span style="left:308.5px;top:307.0px;font:12px/14px 'Liberation Sans',sans-serif;color:#000;white-space:pre;letter-spacing:-0.277px;">Settings:</span>
<div style="left:364px;top:304.5px;width:288.5px;height:19px;border:1px solid #adadad;border-radius:3px;background:linear-gradient(#f3f3f3,#e6e6e6);"></div>
<span style="left:376.5px;top:306.5px;font:12px/14px 'Liberation Sans',sans-serif;color:#000;white-space:pre;letter-spacing:-0.113px;">User controlled</span>
<svg style="left:639.7px;top:311.5px;" width="8" height="5" viewBox="0 0 8 5"><path d="M0 0 L7.6 0 L3.8 4.2 Z" fill="#111"/></svg>
<span style="left:308.5px;top:333.0px;font:12px/14px 'Liberation Sans',sans-serif;color:#000;white-space:pre;letter-spacing:0.121px;">Method:</span>
<div style="left:364px;top:330.5px;width:288.5px;height:19px;border:1px solid #adadad;border-radius:3px;background:linear-gradient(#f3f3f3,#e6e6e6);"></div>
<span style="left:376.5px;top:332.5px;font:12px/14px 'Liberation Sans',sans-serif;color:#000;white-space:pre;letter-spacing:-0.045px;">Solution</span>
<svg style="left:639.7px;top:337.5px;" width="8" height="5" viewBox="0 0 8 5"><path d="M0 0 L7.6 0 L3.8 4.2 Z" fill="#111"/></svg>
<span style="left:308.5px;top:360.0px;font:12px/14px 'Liberation Sans',sans-serif;color:#000;white-space:pre;letter-spacing:-0.803px;">Study:</span>
<div style="left:364px;top:357.5px;width:259px;height:19px;border:1px solid #adadad;border-radius:3px;background:linear-gradient(#f3f3f3,#e6e6e6);"></div>
<span style="left:376.5px;top:359.5px;font:12px/14px 'Liberation Sans',sans-serif;color:#000;white-space:pre;letter-spacing:-0.148px;">Study 1, Time Dependent</span>
<svg style="left:610.2px;top:364.5px;" width="8" height="5" viewBox="0 0 8 5"><path d="M0 0 L7.6 0 L3.8 4.2 Z" fill="#111"/></svg>
<div style="left:632.5px;top:357px;width:20px;height:21px;background:#f0f0f0;border:1px solid #adadad;border-radius:3px;"></div>
<svg style="left:636.5px;top:361.5px;" width="12" height="13" viewBox="0 0 12 13"><g stroke="#555" stroke-width="1"><line x1="1" y1="2.5" x2="5" y2="2.5"/><line x1="1" y1="5.5" x2="5" y2="5.5"/><line x1="1" y1="8.5" x2="5" y2="8.5"/><line x1="1" y1="11.5" x2="5" y2="11.5"/></g><path d="M9 12 L9 4 M6.5 6.5 L9 3.5 L11.5 6.5" fill="none" stroke="#3f9b2f" stroke-width="1.6"/><path d="M6 12 L10 12" stroke="#3f9b2f" stroke-width="1.4"/></svg>
<span style="left:308.5px;top:388.0px;font:12px/14px 'Liberation Sans',sans-serif;color:#000;white-space:pre;letter-spacing:-0.298px;">Time (s):</span>
<div style="left:364px;top:385.5px;width:288.5px;height:19px;border:1px solid #adadad;border-radius:3px;background:linear-gradient(#f3f3f3,#e6e6e6);"></div>
<span style="left:376.5px;top:387.5px;font:12px/14px 'Liberation Sans',sans-serif;color:#000;white-space:pre;">5</span>
<svg style="left:639.7px;top:392.5px;" width="8" height="5" viewBox="0 0 8 5"><path d="M0 0 L7.6 0 L3.8 4.2 Z" fill="#111"/></svg>
<div style="left:309.5px;top:416.1px;width:8.5px;height:1px;background:#d0d0d0;"></div>
<span style="left:322.3px;top:408.6px;font:12px/14px 'Liberation Sans',sans-serif;color:#000;white-space:pre;letter-spacing:-0.122px;">Values of variables not solved for</span>
<div style="left:498px;top:416.1px;width:154px;height:1px;background:#d0d0d0;"></div>
<span style="left:308.5px;top:430.0px;font:12px/14px 'Liberation Sans',sans-serif;color:#000;white-space:pre;letter-spacing:-0.277px;">Settings:</span>
<div style="left:364px;top:427.5px;width:288.5px;height:19px;border:1px solid #adadad;border-radius:3px;background:linear-gradient(#f3f3f3,#e6e6e6);"></div>
<span style="left:376.5px;top:429.5px;font:12px/14px 'Liberation Sans',sans-serif;color:#000;white-space:pre;letter-spacing:-0.122px;">Physics controlled</span>
<svg style="left:639.7px;top:434.5px;" width="8" height="5" viewBox="0 0 8 5"><path d="M0 0 L7.6 0 L3.8 4.2 Z" fill="#111"/></svg>
<div style="left:309.5px;top:458.0px;width:8.5px;height:1px;background:#d0d0d0;"></div>
<span style="left:322.3px;top:450.5px;font:12px/14px 'Liberation Sans',sans-serif;color:#000;white-space:pre;letter-spacing:0.014px;">Store fields in output</span>
<div style="left:436px;top:458.0px;width:216px;height:1px;background:#d0d0d0;"></div>
<span style="left:308.5px;top:472.0px;font:12px/14px 'Liberation Sans',sans-serif;color:#000;white-space:pre;letter-spacing:-0.277px;">Settings:</span>
<div style="left:364px;top:469.5px;width:288.5px;height:19px;border:1px solid #adadad;border-radius:3px;background:linear-gradient(#f3f3f3,#e6e6e6);"></div>
<span style="left:376.5px;top:471.5px;font:12px/14px 'Liberation Sans',sans-serif;color:#000;white-space:pre;letter-spacing:0.054px;">All</span>
<svg style="left:639.7px;top:476.5px;" width="8" height="5" viewBox="0 0 8 5"><path d="M0 0 L7.6 0 L3.8 4.2 Z" fill="#111"/></svg>
<div style="left:303px;top:500.7px;width:356px;height:24.5px;background:#dfe8f5;"></div>
<svg style="left:311px;top:507.4px;" width="6" height="10" viewBox="0 0 6 10"><path d="M0.5 0.5 L4.5 4.5 L0.5 8.5 Z" fill="none" stroke="#a8a8a8" stroke-width="1"/></svg>
<span style="left:332px;top:504.4px;font:13px/15px 'Liberation Sans',sans-serif;color:#111;white-space:pre;letter-spacing:-0.063px;">Mesh Selection</span>
<div style="left:303px;top:525.2px;width:356px;height:2px;background:#fff;"></div>
<div style="left:303px;top:527.2px;width:356px;height:25.8px;background:#dfe8f5;"></div>
<svg style="left:311px;top:534.3px;" width="6" height="10" viewBox="0 0 6 10"><path d="M0.5 0.5 L4.5 4.5 L0.5 8.5 Z" fill="none" stroke="#a8a8a8" stroke-width="1"/></svg>
<span style="left:332px;top:531.3px;font:13px/15px 'Liberation Sans',sans-serif;color:#111;white-space:pre;letter-spacing:-0.246px;">Study Extensions</span>
<div style="left:658.5px;top:82px;width:17px;height:471px;background:#f2f2f1;"></div>
<div style="left:658.5px;top:218.5px;width:17px;height:317.5px;background:#c7cac7;"></div>
<svg style="left:663.8px;top:87.6px;" width="7" height="5" viewBox="0 0 7 5"><path d="M0.4 4.2 L3.5 0.9 L6.6 4.2" fill="none" stroke="#8c8c8c" stroke-width="1.3"/></svg>
<svg style="left:663.8px;top:543.2px;" width="7" height="5" viewBox="0 0 7 5"><path d="M0.4 0.6 L3.5 3.9 L6.6 0.6" fill="none" stroke="#8c8c8c" stroke-width="1.3"/></svg>
<div style="left:681px;top:4px;width:430px;height:437px;border:1px solid #c9cbcf;"></div>
<span style="left:689.6px;top:11.5px;font:21.5px/24px 'Liberation Sans',sans-serif;color:#305ea9;white-space:pre;letter-spacing:-1.516px;-webkit-text-stroke:0.55px #fafbfd;">Graphics</span>
<svg style="left:1084px;top:20.0px;" width="8" height="4" viewBox="0 0 8 4"><path d="M0 0 L8 0 L4 3.9 Z" fill="#c2c5c8"/></svg>
<svg style="left:1099px;top:18.2px;" width="7" height="10" viewBox="0 0 7 10"><rect x="1.1" y="0" width="4.8" height="6.4" fill="#c2c5c8"/><rect x="0" y="6.2" width="7" height="1" fill="#c2c5c8"/><rect x="3" y="7.2" width="1" height="2.5" fill="#c2c5c8"/></svg>
<svg style="left:689px;top:40px;" width="14" height="14" viewBox="0 0 14 14"><circle cx="5.5" cy="5.5" r="4.6" fill="#fff" stroke="#3d5a80" stroke-width="1.5"/><line x1="9" y1="9" x2="13" y2="13" stroke="#3d5a80" stroke-width="2.2"/><path d="M3 5.5 L8 5.5 M5.5 3 L5.5 8" stroke="#3d5a80" stroke-width="1.2"/></svg>
<svg style="left:713px;top:40px;" width="14" height="14" viewBox="0 0 14 14"><circle cx="5.5" cy="5.5" r="4.6" fill="#fff" stroke="#3d5a80" stroke-width="1.5"/><line x1="9" y1="9" x2="13" y2="13" stroke="#3d5a80" stroke-width="2.2"/><path d="M3 5.5 L8 5.5" stroke="#3d5a80" stroke-width="1.3"/></svg>
<svg style="left:736px;top:40px;" width="17" height="15" viewBox="0 0 17 15"><rect x="0.5" y="5.5" width="8" height="8" fill="none" stroke="#3d5a80" stroke-width="1" stroke-dasharray="1.5 1.5"/><circle cx="9" cy="5.5" r="4.6" fill="#fff" stroke="#3d5a80" stroke-width="1.5"/><line x1="12.5" y1="9" x2="16.5" y2="13" stroke="#3d5a80" stroke-width="2.2"/><path d="M6.5 5.5 L11.5 5.5 M9 3 L9 8" stroke="#3d5a80" stroke-width="1.2"/></svg>
<svg style="left:760px;top:39px;" width="15" height="15" viewBox="0 0 15 15"><rect x="0.6" y="0.6" width="14" height="13.6" fill="#fff" stroke="#4a4a55" stroke-width="1.1"/><path d="M7.6 1.6 L9.6 3.9 L5.6 3.9 Z M7.6 13.2 L9.6 10.9 L5.6 10.9 Z M1.6 7.4 L3.9 5.4 L3.9 9.4 Z M13.6 7.4 L11.3 5.4 L11.3 9.4 Z" fill="#4a90d9"/><path d="M5 7.4 L10.2 7.4 M7.6 4.8 L7.6 10" stroke="#3a4a66" stroke-width="1.1"/></svg>
<div style="left:786px;top:39px;width:1px;height:16px;background:#d6d6d8;"></div>
<svg style="left:799px;top:39px;" width="18" height="16" viewBox="0 0 18 16"><path d="M7.5 13.5 L7.5 2.5" stroke="#2c62c8" stroke-width="1.2"/><path d="M5.8 3.6 L7.5 0.8 L9.2 3.6 Z" fill="#2c62c8"/><path d="M7.5 13.5 L2.2 8.2" stroke="#2e9b3c" stroke-width="1.2"/><path d="M1 7 L4.2 7.6 L2 9.9 Z" fill="#2e9b3c"/><path d="M7.5 13.5 L15.5 8.3" stroke="#e0245e" stroke-width="1.3"/><path d="M17 7.3 L13.8 7.7 L15.4 10.2 Z" fill="#e0245e"/></svg>
<svg style="left:824px;top:45px;" width="8" height="5" viewBox="0 0 8 5"><path d="M0 0 L8 0 L4 4.5 Z" fill="#222"/></svg>
<svg style="left:842px;top:38px;" width="18" height="18" viewBox="0 0 18 18"><rect x="0.75" y="0.75" width="16.5" height="16.5" rx="1.5" fill="#dfe9f7" stroke="#35598c" stroke-width="1.5"/><rect x="1.5" y="1.5" width="15" height="2.5" fill="#35598c"/><line x1="4.0" y1="5" x2="4.0" y2="15.5" stroke="#35598c" stroke-width="1"/><line x1="3" y1="6.0" x2="15.2" y2="6.0" stroke="#35598c" stroke-width="1"/><line x1="7.3" y1="5" x2="7.3" y2="15.5" stroke="#35598c" stroke-width="1"/><line x1="3" y1="9.0" x2="15.2" y2="9.0" stroke="#35598c" stroke-width="1"/><line x1="10.6" y1="5" x2="10.6" y2="15.5" stroke="#35598c" stroke-width="1"/><line x1="3" y1="12.0" x2="15.2" y2="12.0" stroke="#35598c" stroke-width="1"/><line x1="13.9" y1="5" x2="13.9" y2="15.5" stroke="#35598c" stroke-width="1"/><line x1="3" y1="15.0" x2="15.2" y2="15.0" stroke="#35598c" stroke-width="1"/></svg>
<div style="left:869px;top:39px;width:1px;height:16px;background:#d6d6d8;"></div>
<svg style="left:883px;top:41px;" width="17" height="12" viewBox="0 0 17 12"><path d="M0 2.5 L4 2.5 L5.5 0 L11.5 0 L13 2.5 L16.5 2.5 L16.5 12 L0 12 Z" fill="#3d6ea8"/><circle cx="8.5" cy="7" r="3.6" fill="#e8eef7"/><circle cx="8.5" cy="7" r="2" fill="#3d6ea8"/></svg>
<svg style="left:908px;top:39px;" width="15" height="15" viewBox="0 0 15 15"><rect x="3" y="0.5" width="9" height="6" fill="#fff" stroke="#3d6ea8" stroke-width="1.2"/><rect x="0" y="5.5" width="15" height="7" rx="1" fill="#3d6ea8"/><rect x="2.5" y="10" width="10" height="5" fill="#3d6ea8"/><rect x="3.5" y="11" width="8" height="1.2" fill="#dfe9f7"/></svg>
<div style="left:682px;top:59.5px;width:428px;height:380.5px;background:#fff;"></div>
<svg style="left:1083px;top:65px;" width="23" height="21" viewBox="0 0 23 21"><defs><linearGradient id="mi" x1="0" y1="0" x2="1" y2="0"><stop offset="0" stop-color="#f8e04a"/><stop offset="0.4" stop-color="#e8e060"/><stop offset="0.6" stop-color="#58b8e8"/><stop offset="1" stop-color="#1c50c0"/></linearGradient></defs><path d="M2 6 L13 1.5 L21 4 L22.5 15 L13 20 L4 17 Z" fill="#f4f4f6" stroke="#e0e0e4" stroke-width="0.8"/><rect x="5" y="3.8" width="14" height="11.4" rx="3" fill="#1a2f9c"/><rect x="8" y="6" width="9.5" height="7" rx="1" fill="url(#mi)"/></svg>
<span style="left:759.3px;top:74.7px;font:12px/14px 'DejaVu Sans',sans-serif;color:#000;white-space:pre;letter-spacing:0.022px;">Time=4 s</span>
<span style="left:829px;top:74.7px;font:12px/14px 'DejaVu Sans',sans-serif;color:#000;white-space:pre;letter-spacing:0.193px;">Surface:</span>
<span style="left:885.2px;top:74.7px;font:12px/14px 'DejaVu Sans',sans-serif;color:#000;white-space:pre;letter-spacing:0.371px;">Temperature</span>
<span style="left:969.8px;top:74.7px;font:12px/14px 'DejaVu Sans',sans-serif;color:#000;white-space:pre;letter-spacing:0.156px;">(K)</span>
<span style="left:684.3px;top:90px;font:12px/14px 'DejaVu Sans',sans-serif;color:#000;white-space:pre;letter-spacing:-1.339px;">mm</span>
<svg style="left:0px;top:0px;" width="1350" height="582" viewBox="0 0 1350 582"><defs>
<linearGradient id="gv" x1="0" y1="0" x2="0" y2="1">
<stop offset="0" stop-color="#b00c00"/><stop offset="0.035" stop-color="#f03000"/><stop offset="0.075" stop-color="#ff8800"/><stop offset="0.125" stop-color="#ffc800"/><stop offset="0.19" stop-color="#ffec00"/><stop offset="0.28" stop-color="#ffff30"/><stop offset="0.5" stop-color="#ffff60"/><stop offset="0.72" stop-color="#ffff30"/><stop offset="0.81" stop-color="#ffec00"/><stop offset="0.875" stop-color="#ffc800"/><stop offset="0.925" stop-color="#ff8800"/><stop offset="0.965" stop-color="#f03000"/><stop offset="1" stop-color="#b00c00"/>
</linearGradient>
<linearGradient id="gw" x1="0" y1="0" x2="1" y2="0">
<stop offset="0" stop-color="#fff" stop-opacity="0"/><stop offset="0.05" stop-color="#fff" stop-opacity="0.05"/><stop offset="0.3" stop-color="#fff" stop-opacity="1"/><stop offset="0.7" stop-color="#fff" stop-opacity="1"/><stop offset="0.95" stop-color="#fff" stop-opacity="0.05"/><stop offset="1" stop-color="#fff" stop-opacity="0"/>
</linearGradient>
<linearGradient id="gm" x1="0" y1="0" x2="0" y2="1">
<stop offset="0.18" stop-color="#fff" stop-opacity="0"/><stop offset="0.38" stop-color="#fff" stop-opacity="0.95"/><stop offset="0.62" stop-color="#fff" stop-opacity="0.95"/><stop offset="0.82" stop-color="#fff" stop-opacity="0"/>
</linearGradient>
<mask id="mk"><rect x="735.3" y="243.4" width="256.5" height="25.6" fill="url(#gm)"/></mask>
<linearGradient id="ge" x1="0" y1="0" x2="1" y2="0">
<stop offset="0" stop-color="#e01800" stop-opacity="0.95"/><stop offset="0.02" stop-color="#f04000" stop-opacity="0.7"/><stop offset="0.06" stop-color="#ff8000" stop-opacity="0.3"/><stop offset="0.14" stop-color="#ff9000" stop-opacity="0"/><stop offset="0.86" stop-color="#ff9000" stop-opacity="0"/><stop offset="0.94" stop-color="#ff8000" stop-opacity="0.3"/><stop offset="0.98" stop-color="#f04000" stop-opacity="0.7"/><stop offset="1" stop-color="#e01800" stop-opacity="0.95"/>
</linearGradient>
<linearGradient id="gem" x1="0" y1="0" x2="0" y2="1">
<stop offset="0" stop-color="#fff" stop-opacity="1"/><stop offset="0.3" stop-color="#fff" stop-opacity="0.35"/><stop offset="0.5" stop-color="#fff" stop-opacity="0.04"/><stop offset="0.7" stop-color="#fff" stop-opacity="0.35"/><stop offset="1" stop-color="#fff" stop-opacity="1"/>
</linearGradient>
<mask id="mke"><rect x="735.3" y="243.4" width="256.5" height="25.6" fill="url(#gem)"/></mask>
<linearGradient id="cb" x1="0" y1="0" x2="0" y2="1">
<stop offset="0" stop-color="#ffffff"/><stop offset="0.15" stop-color="#ffffb4"/><stop offset="0.3" stop-color="#ffff3c"/><stop offset="0.42" stop-color="#ffe000"/><stop offset="0.55" stop-color="#ffa800"/><stop offset="0.66" stop-color="#f56400"/><stop offset="0.76" stop-color="#e41a12"/><stop offset="0.88" stop-color="#a80808"/><stop offset="1" stop-color="#6a0000"/>
</linearGradient>
</defs><rect x="735.3" y="243.4" width="256.5" height="25.6" fill="url(#gv)"/><rect x="735.3" y="243.4" width="256.5" height="25.6" fill="url(#gw)" mask="url(#mk)"/><rect x="735.3" y="243.4" width="256.5" height="25.6" fill="url(#ge)" mask="url(#mke)"/><rect x="735.3" y="243.4" width="256.5" height="25.6" fill="none" stroke="#111" stroke-width="1.2"/><rect x="729" y="96.6" width="269.5" height="319.6" fill="none" stroke="#4a4a4a" stroke-width="1.8"/><line x1="729" y1="409.9" x2="735" y2="409.9" stroke="#4a4a4a" stroke-width="1.5"/><line x1="998.5" y1="409.9" x2="992.5" y2="409.9" stroke="#4a4a4a" stroke-width="1.5"/><line x1="729" y1="384.3" x2="735" y2="384.3" stroke="#4a4a4a" stroke-width="1.5"/><line x1="998.5" y1="384.3" x2="992.5" y2="384.3" stroke="#4a4a4a" stroke-width="1.5"/><line x1="729" y1="358.7" x2="735" y2="358.7" stroke="#4a4a4a" stroke-width="1.5"/><line x1="998.5" y1="358.7" x2="992.5" y2="358.7" stroke="#4a4a4a" stroke-width="1.5"/><line x1="729" y1="333.0" x2="735" y2="333.0" stroke="#4a4a4a" stroke-width="1.5"/><line x1="998.5" y1="333.0" x2="992.5" y2="333.0" stroke="#4a4a4a" stroke-width="1.5"/><line x1="729" y1="307.4" x2="735" y2="307.4" stroke="#4a4a4a" stroke-width="1.5"/><line x1="998.5" y1="307.4" x2="992.5" y2="307.4" stroke="#4a4a4a" stroke-width="1.5"/><line x1="729" y1="281.7" x2="735" y2="281.7" stroke="#4a4a4a" stroke-width="1.5"/><line x1="998.5" y1="281.7" x2="992.5" y2="281.7" stroke="#4a4a4a" stroke-width="1.5"/><line x1="729" y1="256.1" x2="735" y2="256.1" stroke="#4a4a4a" stroke-width="1.5"/><line x1="998.5" y1="256.1" x2="992.5" y2="256.1" stroke="#4a4a4a" stroke-width="1.5"/><line x1="729" y1="230.5" x2="735" y2="230.5" stroke="#4a4a4a" stroke-width="1.5"/><line x1="998.5" y1="230.5" x2="992.5" y2="230.5" stroke="#4a4a4a" stroke-width="1.5"/><line x1="729" y1="204.8" x2="735" y2="204.8" stroke="#4a4a4a" stroke-width="1.5"/><line x1="998.5" y1="204.8" x2="992.5" y2="204.8" stroke="#4a4a4a" stroke-width="1.5"/><line x1="729" y1="179.2" x2="735" y2="179.2" stroke="#4a4a4a" stroke-width="1.5"/><line x1="998.5" y1="179.2" x2="992.5" y2="179.2" stroke="#4a4a4a" stroke-width="1.5"/><line x1="729" y1="153.5" x2="735" y2="153.5" stroke="#4a4a4a" stroke-width="1.5"/><line x1="998.5" y1="153.5" x2="992.5" y2="153.5" stroke="#4a4a4a" stroke-width="1.5"/><line x1="729" y1="127.9" x2="735" y2="127.9" stroke="#4a4a4a" stroke-width="1.5"/><line x1="998.5" y1="127.9" x2="992.5" y2="127.9" stroke="#4a4a4a" stroke-width="1.5"/><line x1="729" y1="102.3" x2="735" y2="102.3" stroke="#4a4a4a" stroke-width="1.5"/><line x1="998.5" y1="102.3" x2="992.5" y2="102.3" stroke="#4a4a4a" stroke-width="1.5"/><line x1="761.3" y1="96.6" x2="761.3" y2="102.6" stroke="#4a4a4a" stroke-width="1.5"/><line x1="761.3" y1="416.2" x2="761.3" y2="410.2" stroke="#4a4a4a" stroke-width="1.5"/><line x1="812.6" y1="96.6" x2="812.6" y2="102.6" stroke="#4a4a4a" stroke-width="1.5"/><line x1="812.6" y1="416.2" x2="812.6" y2="410.2" stroke="#4a4a4a" stroke-width="1.5"/><line x1="863.9" y1="96.6" x2="863.9" y2="102.6" stroke="#4a4a4a" stroke-width="1.5"/><line x1="863.9" y1="416.2" x2="863.9" y2="410.2" stroke="#4a4a4a" stroke-width="1.5"/><line x1="915.2" y1="96.6" x2="915.2" y2="102.6" stroke="#4a4a4a" stroke-width="1.5"/><line x1="915.2" y1="416.2" x2="915.2" y2="410.2" stroke="#4a4a4a" stroke-width="1.5"/><line x1="966.5" y1="96.6" x2="966.5" y2="102.6" stroke="#4a4a4a" stroke-width="1.5"/><line x1="966.5" y1="416.2" x2="966.5" y2="410.2" stroke="#4a4a4a" stroke-width="1.5"/><rect x="1019" y="147.5" width="16" height="244.5" fill="url(#cb)" stroke="#333" stroke-width="1"/><line x1="1019" y1="180.7" x2="1022" y2="180.7" stroke="#333" stroke-width="1"/><line x1="1035" y1="180.7" x2="1032" y2="180.7" stroke="#333" stroke-width="1"/><line x1="1019" y1="220.0" x2="1022" y2="220.0" stroke="#333" stroke-width="1"/><line x1="1035" y1="220.0" x2="1032" y2="220.0" stroke="#333" stroke-width="1"/><line x1="1019" y1="259.4" x2="1022" y2="259.4" stroke="#333" stroke-width="1"/><line x1="1035" y1="259.4" x2="1032" y2="259.4" stroke="#333" stroke-width="1"/><line x1="1019" y1="298.8" x2="1022" y2="298.8" stroke="#333" stroke-width="1"/><line x1="1035" y1="298.8" x2="1032" y2="298.8" stroke="#333" stroke-width="1"/><line x1="1019" y1="338.1" x2="1022" y2="338.1" stroke="#333" stroke-width="1"/><line x1="1035" y1="338.1" x2="1032" y2="338.1" stroke="#333" stroke-width="1"/><line x1="1019" y1="377.4" x2="1022" y2="377.4" stroke="#333" stroke-width="1"/><line x1="1035" y1="377.4" x2="1032" y2="377.4" stroke="#333" stroke-width="1"/><path d="M1005 121.5 L1010.7 111 L1016.5 121.5 Z" fill="#000"/><path d="M1005 404 L1016.5 404 L1010.7 414.5 Z" fill="#000"/></svg>
<span style="left:705.000625px;top:403.44000000000005px;font:12px/14px 'DejaVu Sans',sans-serif;color:#000;white-space:pre;">-30</span>
<span style="left:705.000625px;top:377.8px;font:12px/14px 'DejaVu Sans',sans-serif;color:#000;white-space:pre;">-25</span>
<span style="left:705.000625px;top:352.16px;font:12px/14px 'DejaVu Sans',sans-serif;color:#000;white-space:pre;">-20</span>
<span style="left:705.000625px;top:326.52000000000004px;font:12px/14px 'DejaVu Sans',sans-serif;color:#000;white-space:pre;">-15</span>
<span style="left:705.000625px;top:300.88px;font:12px/14px 'DejaVu Sans',sans-serif;color:#000;white-space:pre;">-10</span>
<span style="left:712.635625px;top:275.24px;font:12px/14px 'DejaVu Sans',sans-serif;color:#000;white-space:pre;">-5</span>
<span style="left:716.965px;top:249.60000000000002px;font:12px/14px 'DejaVu Sans',sans-serif;color:#000;white-space:pre;">0</span>
<span style="left:716.965px;top:223.96000000000004px;font:12px/14px 'DejaVu Sans',sans-serif;color:#000;white-space:pre;">5</span>
<span style="left:709.33px;top:198.32000000000002px;font:12px/14px 'DejaVu Sans',sans-serif;color:#000;white-space:pre;">10</span>
<span style="left:709.33px;top:172.68px;font:12px/14px 'DejaVu Sans',sans-serif;color:#000;white-space:pre;">15</span>
<span style="left:709.33px;top:147.04000000000002px;font:12px/14px 'DejaVu Sans',sans-serif;color:#000;white-space:pre;">20</span>
<span style="left:709.33px;top:121.40000000000003px;font:12px/14px 'DejaVu Sans',sans-serif;color:#000;white-space:pre;">25</span>
<span style="left:751px;top:423.6px;font:12px/14px 'DejaVu Sans',sans-serif;color:#000;white-space:pre;">-20</span>
<span style="left:802px;top:423.6px;font:12px/14px 'DejaVu Sans',sans-serif;color:#000;white-space:pre;">-10</span>
<span style="left:859.9px;top:423.6px;font:12px/14px 'DejaVu Sans',sans-serif;color:#000;white-space:pre;">0</span>
<span style="left:907px;top:423.6px;font:12px/14px 'DejaVu Sans',sans-serif;color:#000;white-space:pre;">10</span>
<span style="left:957.8px;top:423.6px;font:12px/14px 'DejaVu Sans',sans-serif;color:#000;white-space:pre;">20 mm</span>
<span style="left:1042.5px;top:174.2px;font:12px/14px 'DejaVu Sans',sans-serif;color:#000;white-space:pre;letter-spacing:0.032px;">468</span>
<span style="left:1042.5px;top:213.54999999999998px;font:12px/14px 'DejaVu Sans',sans-serif;color:#000;white-space:pre;letter-spacing:0.032px;">466</span>
<span style="left:1042.5px;top:252.89999999999998px;font:12px/14px 'DejaVu Sans',sans-serif;color:#000;white-space:pre;letter-spacing:0.032px;">464</span>
<span style="left:1042.5px;top:292.25px;font:12px/14px 'DejaVu Sans',sans-serif;color:#000;white-space:pre;letter-spacing:0.032px;">462</span>
<span style="left:1042.5px;top:331.6px;font:12px/14px 'DejaVu Sans',sans-serif;color:#000;white-space:pre;letter-spacing:0.032px;">460</span>
<span style="left:1042.5px;top:370.95px;font:12px/14px 'DejaVu Sans',sans-serif;color:#000;white-space:pre;letter-spacing:0.032px;">458</span>
<span style="left:1021.5px;top:109.8px;font:12px/14px 'DejaVu Sans',sans-serif;color:#000;white-space:pre;letter-spacing:0.032px;">470</span>
<span style="left:1021.5px;top:402.5px;font:12px/14px 'DejaVu Sans',sans-serif;color:#000;white-space:pre;letter-spacing:0.032px;">457</span>
<div style="left:1116px;top:4px;width:232px;height:437px;border:1px solid #c9cbcf;"></div>
<div style="left:1117px;top:33px;width:230px;height:1px;background:#d0d1d4;"></div>
<div style="left:1121px;top:10px;width:65px;height:24px;background:#fafbfd;border:1px solid #d0d1d4;border-bottom:none;"></div>
<span style="left:1126.5px;top:15.5px;font:13.5px/15px 'Liberation Sans',sans-serif;color:#2b579a;white-space:pre;letter-spacing:-0.478px;">Add Stu...</span>
<div style="left:1193.5px;top:10px;width:65.5px;height:22.5px;background:#e9e9ea;"></div>
<span style="left:1198.3px;top:15.5px;font:13.5px/15px 'Liberation Sans',sans-serif;color:#111;white-space:pre;letter-spacing:-0.528px;">Add Phy...</span>
<div style="left:1267px;top:10px;width:68px;height:22.5px;background:#e9e9ea;"></div>
<span style="left:1271.5px;top:15.5px;font:13.5px/15px 'Liberation Sans',sans-serif;color:#111;white-space:pre;letter-spacing:-0.252px;">Add Mat...</span>
<svg style="left:1335.6px;top:19.4px;" width="9" height="8" viewBox="0 0 9 8"><path d="M0.4 0.3 L8.4 7.5 M8.4 0.3 L0.4 7.5" stroke="#c2c5c8" stroke-width="1.1"/></svg>
<svg style="left:1126px;top:44px;" width="11" height="10" viewBox="0 0 11 10"><path d="M4 0 L7 0 L7 3.5 L11 3.5 L11 6.5 L7 6.5 L7 10 L4 10 L4 6.5 L0 6.5 L0 3.5 L4 3.5 Z" fill="#b4b4b4"/></svg>
<span style="left:1143.4px;top:41.7px;font:12.5px/14px 'Liberation Sans',sans-serif;color:#9a9a9a;white-space:pre;letter-spacing:-0.397px;">Add Study</span>
<div style="left:1123.5px;top:76px;width:8.5px;height:1px;background:#d0d0d0;"></div>
<span style="left:1136.4px;top:68.5px;font:12px/14px 'Liberation Sans',sans-serif;color:#000;white-space:pre;letter-spacing:-0.346px;">Studies</span>
<div style="left:1178px;top:76px;width:145.5px;height:1px;background:#d0d0d0;"></div>
<div style="left:1121px;top:88.5px;width:208px;height:305px;background:#fff;border:1px solid #cfd0d3;"></div>
<svg style="left:1128.5px;top:94.5px;" width="7" height="7" viewBox="0 0 7 7"><path d="M6.2 0 L6.2 6.2 L0 6.2 Z" fill="#444"/></svg>
<svg style="left:1142px;top:89.5px;" width="16" height="16" viewBox="0 0 16 16"><path d="M0.5 6.5 C1.5 3.5 3.5 3.5 4.5 6 C5.3 8 6.5 8.5 7.5 7.5" fill="none" stroke="#1b98a6" stroke-width="1.4"/><circle cx="9.4" cy="7.5" r="2.4" fill="none" stroke="#1b98a6" stroke-width="1.15"/><circle cx="14" cy="6.6" r="2.4" fill="none" stroke="#1b98a6" stroke-width="1.15"/></svg>
<span style="left:1162.2px;top:91.0px;font:12px/14px 'Liberation Sans',sans-serif;color:#000;white-space:pre;letter-spacing:-0.396px;">Preset Studies</span>
<svg style="left:1161.5px;top:106.5px;" width="16" height="16" viewBox="0 0 16 16"><path d="M1.5 0.5 L1.5 14.5 L15.5 14.5" fill="none" stroke="#6e6e6e" stroke-width="0.9"/><path d="M0 2.5 L1.5 0.5 L3 2.5 M13.5 13 L15.5 14.5 L13.5 16" fill="none" stroke="#6e6e6e" stroke-width="0.8"/><path d="M3.5 12.5 C4.5 7.5 7 5.5 15 5.5" fill="none" stroke="#1e78b4" stroke-width="1.3"/><line x1="3.5" y1="3.5" x2="15" y2="3.5" stroke="#555" stroke-width="1"/></svg>
<span style="left:1181px;top:108.0px;font:12px/14px 'Liberation Sans',sans-serif;color:#000;white-space:pre;letter-spacing:-0.123px;">Stationary</span>
<svg style="left:1161.5px;top:123.5px;" width="16" height="16" viewBox="0 0 16 16"><path d="M1.5 0.5 L1.5 14.5 L15.5 14.5" fill="none" stroke="#6e6e6e" stroke-width="0.9"/><path d="M0 2.5 L1.5 0.5 L3 2.5 M13.5 13 L15.5 14.5 L13.5 16" fill="none" stroke="#6e6e6e" stroke-width="0.8"/><path d="M3.5 7 L5 5 L6.5 7 L8 5 L9.5 7 L11 5 L12.5 7 L14 5 L15.5 7" fill="none" stroke="#1e78b4" stroke-width="1.2"/><line x1="3.5" y1="10.5" x2="15.5" y2="10.5" stroke="#1e78b4" stroke-width="1.2"/></svg>
<span style="left:1181px;top:125.0px;font:12px/14px 'Liberation Sans',sans-serif;color:#000;white-space:pre;letter-spacing:-0.138px;max-width:147px;overflow:hidden;">Thermal Perturbation, Frequ</span>
<svg style="left:1161.5px;top:140.5px;" width="16" height="16" viewBox="0 0 16 16"><path d="M1.5 0.5 L1.5 14.5 L15.5 14.5" fill="none" stroke="#6e6e6e" stroke-width="0.9"/><path d="M0 2.5 L1.5 0.5 L3 2.5 M13.5 13 L15.5 14.5 L13.5 16" fill="none" stroke="#6e6e6e" stroke-width="0.8"/><path d="M3 12.5 C5.3 11.5 5.8 2.8 7.6 2.8 C9.4 2.8 9.6 10.5 11.8 11.5 L15.5 11.8" fill="none" stroke="#1b8fa6" stroke-width="1.3"/></svg>
<span style="left:1181px;top:142.0px;font:12px/14px 'Liberation Sans',sans-serif;color:#000;white-space:pre;letter-spacing:0.017px;">Time Dependent</span>
<svg style="left:1130.5px;top:160.5px;" width="6" height="10" viewBox="0 0 6 10"><path d="M0.5 0.5 L4.5 4.5 L0.5 8.5 Z" fill="#fff" stroke="#b4b4b4" stroke-width="1"/></svg>
<svg style="left:1142px;top:157.5px;" width="16" height="16" viewBox="0 0 16 16"><path d="M0.5 6.5 C1.5 3.5 3.5 3.5 4.5 6 C5.3 8 6.5 8.5 7.5 7.5" fill="none" stroke="#1b98a6" stroke-width="1.4"/><circle cx="9.4" cy="7.5" r="2.4" fill="none" stroke="#1b98a6" stroke-width="1.15"/><circle cx="14" cy="6.6" r="2.4" fill="none" stroke="#1b98a6" stroke-width="1.15"/></svg>
<span style="left:1162.2px;top:159.0px;font:12px/14px 'Liberation Sans',sans-serif;color:#000;white-space:pre;letter-spacing:-0.136px;">Custom Studies</span>
<svg style="left:1142px;top:174.5px;" width="16" height="16" viewBox="0 0 16 16"><path d="M0.5 6.5 C1.5 3.5 3.5 3.5 4.5 6 C5.3 8 6.5 8.5 7.5 7.5" fill="none" stroke="#1b98a6" stroke-width="1.4"/><circle cx="9.4" cy="7.5" r="2.4" fill="none" stroke="#1b98a6" stroke-width="1.15"/><circle cx="14" cy="6.6" r="2.4" fill="none" stroke="#1b98a6" stroke-width="1.15"/></svg>
<span style="left:1162.2px;top:176.0px;font:12px/14px 'Liberation Sans',sans-serif;color:#000;white-space:pre;letter-spacing:-0.066px;">Empty Study</span>
<div style="left:1330px;top:62px;width:17px;height:375px;background:#f2f2f1;"></div>
<div style="left:1330px;top:79.5px;width:17px;height:271px;background:#c7cac7;"></div>
<svg style="left:1335.8px;top:68.6px;" width="7" height="5" viewBox="0 0 7 5"><path d="M0.4 4.2 L3.5 0.9 L6.6 4.2" fill="none" stroke="#8c8c8c" stroke-width="1.3"/></svg>
<svg style="left:1335.8px;top:425.8px;" width="7" height="5" viewBox="0 0 7 5"><path d="M0.4 0.6 L3.5 3.9 L6.6 0.6" fill="none" stroke="#8c8c8c" stroke-width="1.3"/></svg>
<div style="left:1123.5px;top:405px;width:8.5px;height:1px;background:#d0d0d0;"></div>
<span style="left:1136.4px;top:398px;font:12px/14px 'Liberation Sans',sans-serif;color:#000;white-space:pre;letter-spacing:-0.140px;">Physics interfaces in study</span>
<div style="left:1278px;top:405px;width:45.5px;height:1px;background:#d0d0d0;"></div>
<div style="left:1117px;top:413.5px;width:213px;height:23px;background:#f6f6f7;border:1px solid #c6c7ca;border-bottom:none;border-left:none;"></div>
<div style="left:1117px;top:414.5px;width:21px;height:22px;background:#f0f0f1;"></div>
<div style="left:1138px;top:414px;width:1px;height:22.5px;background:#c6c7ca;"></div>
<div style="left:1291px;top:414px;width:1px;height:22.5px;background:#c6c7ca;"></div>
<span style="left:1143.4px;top:421.5px;font:12px/14px 'Liberation Sans',sans-serif;color:#000;white-space:pre;letter-spacing:-0.535px;">Physics</span>
<span style="left:1296.2px;top:421.5px;font:12px/14px 'Liberation Sans',sans-serif;color:#000;white-space:pre;letter-spacing:-0.443px;">Solve</span>
<div style="left:1117px;top:436.5px;width:230px;height:1px;background:#e4e5e7;"></div>
<div style="left:681px;top:446px;width:667px;height:109px;border:1px solid #c9cbcf;"></div>
<div style="left:682px;top:475px;width:665px;height:1px;background:#d0d1d4;"></div>
<div style="left:686px;top:452px;width:69px;height:24px;background:#fafbfd;border:1px solid #d0d1d4;border-bottom:none;"></div>
<span style="left:691.3px;top:457.5px;font:13.5px/15px 'Liberation Sans',sans-serif;color:#2b579a;white-space:pre;letter-spacing:-0.416px;">Messages</span>
<div style="left:763px;top:452.5px;width:60px;height:22px;background:#e9e9ea;"></div>
<span style="left:767.3px;top:457.5px;font:13.5px/15px 'Liberation Sans',sans-serif;color:#111;white-space:pre;letter-spacing:-0.352px;">Progress</span>
<div style="left:831px;top:452.5px;width:30px;height:22px;background:#e9e9ea;"></div>
<span style="left:835.5px;top:457.5px;font:13.5px/15px 'Liberation Sans',sans-serif;color:#111;white-space:pre;letter-spacing:-0.441px;">Log</span>
<svg style="left:1306px;top:463.0px;" width="8" height="4" viewBox="0 0 8 4"><path d="M0 0 L8 0 L4 3.9 Z" fill="#c2c5c8"/></svg>
<svg style="left:1321px;top:461.2px;" width="7" height="10" viewBox="0 0 7 10"><rect x="1.1" y="0" width="4.8" height="6.4" fill="#c2c5c8"/><rect x="0" y="6.2" width="7" height="1" fill="#c2c5c8"/><rect x="3" y="7.2" width="1" height="2.5" fill="#c2c5c8"/></svg>
<svg style="left:1335px;top:461.2px;" width="9" height="8" viewBox="0 0 9 8"><path d="M0.4 0.3 L8.4 7.5 M8.4 0.3 L0.4 7.5" stroke="#c2c5c8" stroke-width="1.1"/></svg>
<svg style="left:690px;top:482px;" width="12" height="17" viewBox="0 0 12 17"><path d="M1.5 1 L5 8.2" stroke="#3c3c34" stroke-width="1.8"/><path d="M3.6 8 L6.3 7 L11.4 14.6 L6.2 16.6 L3.6 14 Z" fill="#f8dcb8" stroke="#7a5c46" stroke-width="0.9"/><path d="M3.8 9 L7 8.2" stroke="#d04a28" stroke-width="1.4"/></svg>
<div style="left:686px;top:504px;width:658px;height:45.5px;background:#fff;border:1px solid #cfd0d3;"></div>
<div style="left:1325px;top:505px;width:18px;height:43.5px;background:#f2f2f1;"></div>
<div style="left:1325px;top:521.5px;width:18px;height:9.5px;background:#c7cac7;"></div>
<svg style="left:1330px;top:510.3px;" width="7" height="5" viewBox="0 0 7 5"><path d="M0.4 4.2 L3.5 0.9 L6.6 4.2" fill="none" stroke="#8c8c8c" stroke-width="1.3"/></svg>
<svg style="left:1330px;top:538px;" width="7" height="5" viewBox="0 0 7 5"><path d="M0.4 0.6 L3.5 3.9 L6.6 0.6" fill="none" stroke="#8c8c8c" stroke-width="1.3"/></svg>
<span style="left:690px;top:505.70000000000005px;font:12px/14px 'Liberation Sans',sans-serif;color:#000;white-space:pre;letter-spacing:-0.263px;">COMSOL Multiphysics 5.3.0.260</span>
<span style="left:690px;top:520.9px;font:12px/14px 'Liberation Sans',sans-serif;color:#000;white-space:pre;letter-spacing:-0.033px;">Opened file: C:\Users\tb2arvd\Downloads\brake_disc.mph</span>
<span style="left:690px;top:535.9px;font:12px/14px 'Liberation Sans',sans-serif;color:#000;white-space:pre;letter-spacing:-0.085px;">Opened file: C:\Users\tb2arvd\Desktop\[Process Modelling SD2415]\Laboration Heat transfer\Lab_1\Lab1_B.mph</span>
</body></html>
